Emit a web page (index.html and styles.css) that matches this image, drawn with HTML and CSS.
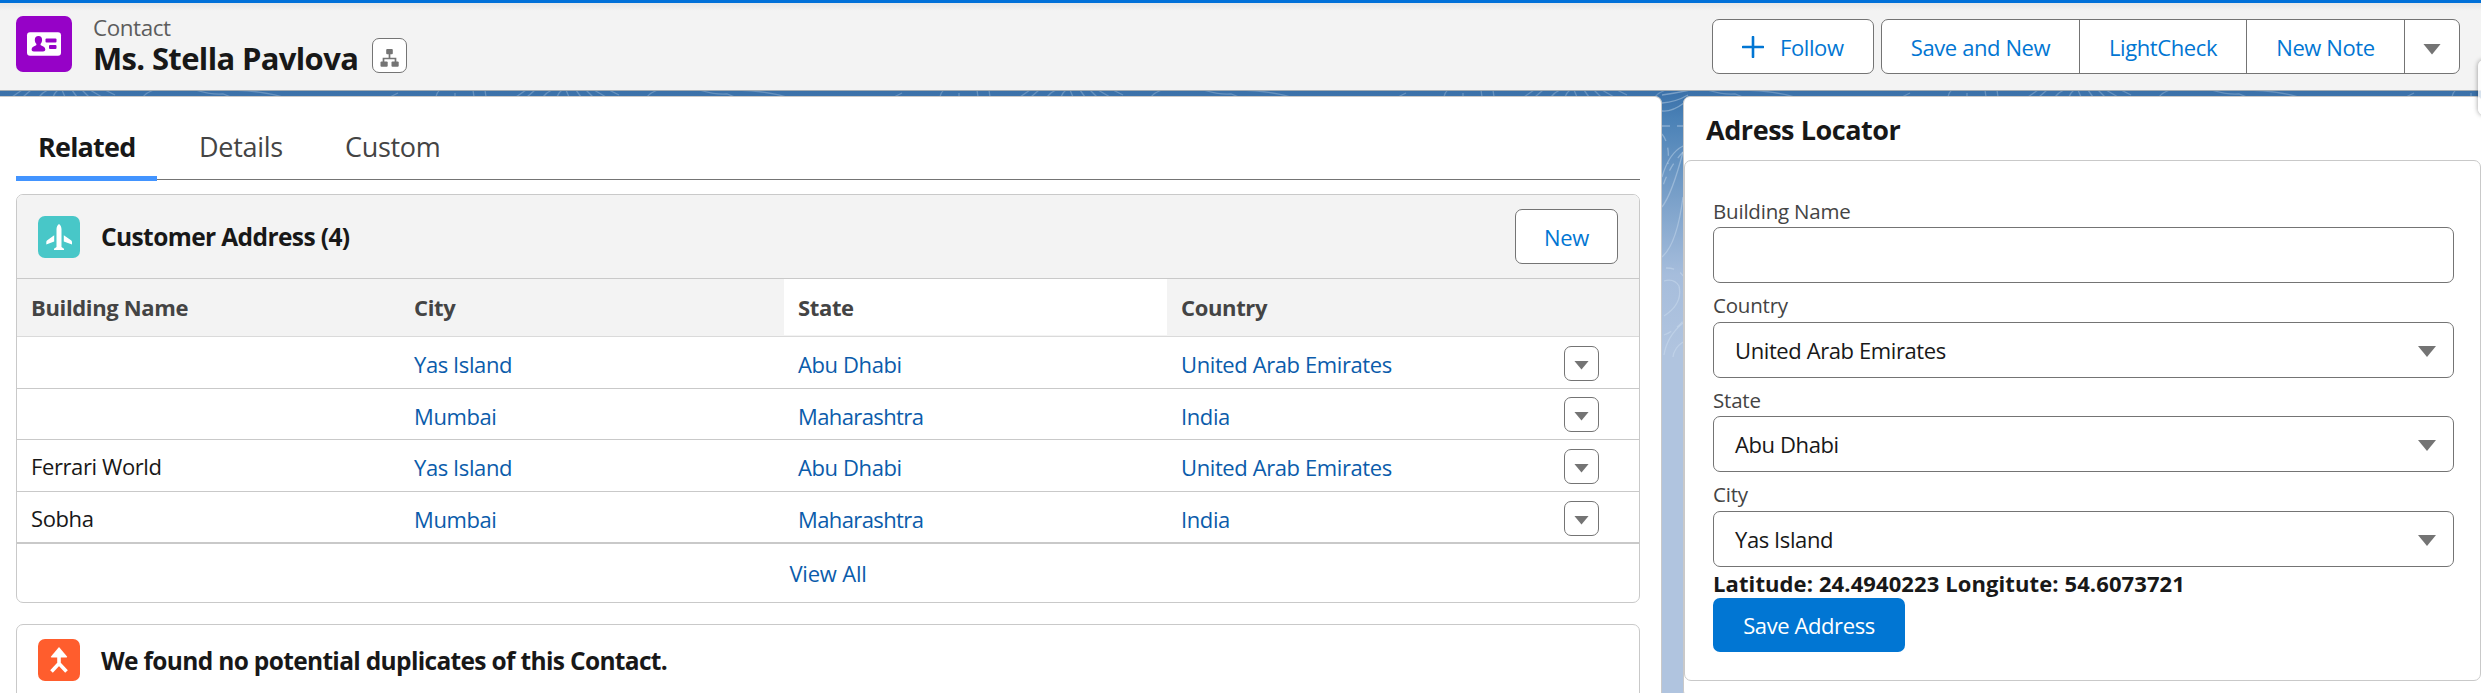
FILE: index.html
```html
<!DOCTYPE html>
<html lang="en">
<head>
<meta charset="utf-8">
<title>Ms. Stella Pavlova | Contact</title>
<link rel="stylesheet" href="styles.css">
</head>
<body>
<div class="page">
  <svg class="contours" width="2481" height="270" viewBox="0 0 2481 270" fill="none">
    <defs>
      <pattern id="strip" width="504" height="8" patternUnits="userSpaceOnUse">
        <path d="M12 7l10-7M23 7l8-7M39 7q4-5 9-7M53 7q2-5 5-7M62 0l3 7M72 0l5 7M82 0l7 7M90 0l12 7M105 0l10 5M143 7q4-5 11-7M195 0q17 5 28 4l8 3M233 0q30 1 50 7M390 7l8-4M436 7q1-5 4-7M455 7V3M473 0l1 7M486 7l-1-7"/>
      </pattern>
    </defs>
    <rect class="strip" width="2481" height="8" fill="url(#strip)"/>
    <g>
      <path d="M1662 5q14-2 28-5M1662 13q14-1 26-8M1662 21q10 1 22-8M1662 87q7-24 21-31M1662 117q10-13 21-55M1662 167q15-13 21-60M1664 191q10-3 15 5q4 18-15 30M1664 265q3-19 19-32M1673 267q1-9 10-15"/>
      <path stroke-dasharray="8 7" d="M1662 36h21M1662 44q8 10 6 30M1683 62q-15 16-21 37M1666 178q12 0 17 8M1664 245q12-5 19-14"/>
    </g>
  </svg>

  <header class="record-header">
    <div class="tile tile-contact">
      <svg width="56" height="56" viewBox="0 0 56 56">
        <rect x="11" y="16.300" width="34" height="23.400" rx="3" fill="#fff"/>
        <path fill="#9602c7" d="M22.500 20c2.400 0 3.600 1.700 3.600 3.900 0 1.500-.6 2.700-1.300 3.700-.5.900-.3 1.600.5 2 2.200.9 3.900 1.800 4 3.800 0 1.200-.9 2-2.200 2H17.800c-1.400 0-2.200-.8-2.200-2 .1-2 1.900-2.900 4.100-3.800.8-.4 1-1.100.4-2-.7-1-1.300-2.200-1.300-3.700 0-2.200 1.300-3.900 3.700-3.900z"/>
        <rect x="29.500" y="22.500" width="11" height="4" rx="1" fill="#9602c7"/>
        <rect x="33" y="29" width="7.500" height="4" rx="1" fill="#9602c7"/>
      </svg>
    </div>
    <div class="record-name">
      <span class="entity">Contact</span>
      <h1>Ms. Stella Pavlova</h1>
    </div>
    <button class="icon-button hierarchy" aria-label="View hierarchy">
      <svg width="19" height="18" viewBox="0 0 19 18">
        <path fill="none" stroke="#747474" stroke-width="1.700" d="M9.500 5v4.500M3.500 13V9.500h12V13"/>
        <g fill="#747474"><rect x="6.200" width="6.600" height="5.300" rx="1"/><rect x=".5" y="12.500" width="7.200" height="5.300" rx="1"/><rect x="11.500" y="12.500" width="7.200" height="5.300" rx="1"/></g>
      </svg>
    </button>
    <div class="actions">
      <button class="btn follow"><svg width="22" height="22" viewBox="0 0 22 22"><path d="M11 1v20M1 11h20" stroke="#0176d3" stroke-width="2.600" stroke-linecap="round"/></svg><span>Follow</span></button>
      <div class="button-group">
        <button class="seg seg-save">Save and New</button>
        <button class="seg seg-check">LightCheck</button>
        <button class="seg seg-note">New Note</button>
        <button class="seg seg-more" aria-label="More actions"><i class="caret"></i></button>
      </div>
    </div>
  </header>

  <main class="columns">
    <section class="panel main-panel">
      <nav class="tabs">
        <a class="tab active">Related</a>
        <a class="tab tab-details">Details</a>
        <a class="tab tab-custom">Custom</a>
      </nav>

      <article class="card">
        <div class="card-header">
          <div class="tile tile-address">
            <svg width="42" height="42" viewBox="0 0 42 42" fill="#fff">
              <path d="M21 8c-1.700 1.200-2.500 3-2.500 5.200V31l-2.500 1.700V34h10v-1.300L23.500 31V13.200C23.500 11 22.700 9.200 21 8z"/>
              <path d="M16.200 19.300v6.300L8.300 28.400v-2.200c0-.8.300-1.400 1-1.900zM25.800 19.300v6.300l8.200 2.800v-2.200c0-.8-.3-1.400-1-1.900z"/>
            </svg>
          </div>
          <h2>Customer Address (4)</h2>
          <button class="btn new-button">New</button>
        </div>
        <div class="grid-row grid-head">
          <div>Building Name</div><div>City</div><div class="hovered">State</div><div>Country</div><div></div>
        </div>
        <div class="grid-row row-a">
          <div></div><a>Yas Island</a><a>Abu Dhabi</a><a>United Arab Emirates</a><button class="icon-button" aria-label="Row actions"><i class="caret small"></i></button>
        </div>
        <div class="grid-row row-b">
          <div></div><a>Mumbai</a><a class="long">Maharashtra</a><a>India</a><button class="icon-button" aria-label="Row actions"><i class="caret small"></i></button>
        </div>
        <div class="grid-row row-a">
          <div>Ferrari World</div><a>Yas Island</a><a>Abu Dhabi</a><a>United Arab Emirates</a><button class="icon-button" aria-label="Row actions"><i class="caret small"></i></button>
        </div>
        <div class="grid-row row-last">
          <div>Sobha</div><a>Mumbai</a><a class="long">Maharashtra</a><a>India</a><button class="icon-button" aria-label="Row actions"><i class="caret small"></i></button>
        </div>
        <a class="view-all">View All</a>
      </article>

      <article class="card duplicates">
        <div class="tile tile-merge">
          <svg width="42" height="42" viewBox="0 0 42 42">
            <path fill="#fff" d="M21 8l8 9.500c.3.500.1.900-.5.900H13.500c-.6 0-.8-.4-.5-.9z"/>
            <path fill="none" stroke="#fff" stroke-width="3.600" stroke-linejoin="round" d="M21 17v7.500L13.500 32.500M21 24.500l7.500 8"/>
          </svg>
        </div>
        <h2>We found no potential duplicates of this Contact.</h2>
      </article>
    </section>

    <aside class="panel side-panel">
      <h2 class="side-title">Adress Locator</h2>
      <div class="locator">
        <label>Building Name</label>
        <div class="field"></div>
        <label>Country</label>
        <div class="field"><span>United Arab Emirates</span><i class="caret"></i></div>
        <label class="tight">State</label>
        <div class="field"><span>Abu Dhabi</span><i class="caret"></i></div>
        <label>City</label>
        <div class="field"><span>Yas Island</span><i class="caret"></i></div>
        <p class="coords">Latitude: 24.4940223 Longitute: 54.6073721</p>
        <button class="save">Save Address</button>
      </div>
    </aside>
  </main>
  <div class="drawer-handle"></div>
</div>
</body>
</html>
```

FILE: styles.css
```css
* { box-sizing: border-box; }
body { margin: 0; font-family: "Open Sans", "Noto Sans", sans-serif; font-size: 22px; letter-spacing: -0.4px; color: #181818; }
h1, h2, p { margin: 0; }
button { font: inherit; letter-spacing: inherit; padding: 0; margin: 0; cursor: pointer; }
svg { display: block; }

.page {
  position: relative;
  width: 2481px;
  height: 693px;
  overflow: hidden;
  background: linear-gradient(#3a70a8 90px, #4a81b6 118px, #7ea3cb 205px, #a6bddc 275px, #b0c4df 350px);
}
.contours { position: absolute; left: 0; top: 90px; stroke: #d5e3f3; stroke-opacity: .4; stroke-width: 1.3; }
.strip { stroke: none; opacity: .7; }

/* Record header */
.record-header {
  position: relative;
  display: flex;
  height: 91px;
  padding: 13px 21px 0 16px;
  border-top: 3px solid #0070d8;
  border-bottom: 1px solid #a3acb3;
  background: linear-gradient(#e6e6e6, #f3f3f3 8px);
}
.tile { flex: none; border-radius: 7px; }
.tile-contact { width: 56px; height: 56px; background: #9602c7; }
.record-name { width: 279px; margin-left: 21px; }
.entity { display: block; height: 22px; margin-top: -3px; line-height: 30px; font-size: 22.400px; color: #5c5c5c; }
h1 { margin-top: 3px; font-size: 31px; line-height: 40px; font-weight: 700; letter-spacing: -0.650px; white-space: nowrap; }
.icon-button {
  display: flex;
  align-items: center;
  justify-content: center;
  width: 35px;
  height: 35px;
  border: 1px solid #747474;
  border-radius: 7px;
  background: #fff;
}
.hierarchy { margin-top: 22px; padding-top: 4px; }
.actions { display: flex; gap: 7px; height: 55px; margin: 3px 0 0 auto; }
.btn { border: 1px solid #747474; border-radius: 7px; background: #fff; color: #0176d3; }
.follow { display: flex; align-items: center; width: 162px; padding-left: 29px; gap: 16px; }
.button-group { display: flex; width: 579px; border: 1px solid #747474; border-radius: 7px; background: #fff; overflow: hidden; }
.seg { border: 0; border-right: 1px solid #747474; background: none; color: #0176d3; white-space: nowrap; }
.seg-save { width: 198px; }
.seg-check { width: 167px; }
.seg-note { width: 158px; }
.seg-more { flex: 1; border-right: 0; display: flex; align-items: center; justify-content: center; padding-top: 5px; }
.caret { width: 18px; height: 11px; background: #747474; clip-path: polygon(0 0, 100% 0, 50% 100%); }
.caret.small { width: 15px; height: 9px; margin-top: 3px; }

/* Columns */
.columns { position: relative; display: flex; gap: 21px; padding-top: 5px; }
.panel { flex: none; height: 602px; border: 1px solid #c9c9c9; background: #fff; }
.main-panel { width: 1662px; height: 640px; padding: 0 21px 0 16px; border-left: 0; border-radius: 0 7px 7px 0; }
.side-panel { width: 800px; border-radius: 7px; }

.tabs { position: relative; display: flex; height: 83px; border-bottom: 1px solid #747474; font-size: 27px; color: #444; }
.tab { line-height: 100px; letter-spacing: -0.300px; }
.tab.active { width: 141px; height: 84px; padding-left: 22px; border-bottom: 5px solid #4294ff; color: #181818; font-weight: 700; letter-spacing: -0.800px; }
.tab-details { margin-left: 42px; width: 146px; }

.card { border: 1px solid #c9c9c9; border-radius: 7px; overflow: hidden; background: #fff; width: 1624px; }
.tabs + .card { margin-top: 14px; height: 409px; }
.card-header { display: flex; align-items: center; height: 84px; padding: 0 21px; border-bottom: 1px solid #c9c9c9; background: #f3f3f3; }
.card h2 { margin-left: 21px; font-size: 24.500px; font-weight: 700; letter-spacing: -0.600px; white-space: nowrap; }
.tile-address { width: 42px; height: 42px; background: #48c7c8; }
.tile-merge { width: 42px; height: 42px; background: #ff5d2d; }
.new-button { width: 103px; height: 55px; margin-left: auto; }

.grid-row { display: grid; grid-template-columns: 383px 384px 383px 383px 1fr; border-bottom: 1px solid #c9c9c9; white-space: nowrap; }
.grid-row > div, .grid-row > a { padding-left: 14px; }
.grid-row > a { color: #0b5cab; padding-top: 1px; }
.grid-row > .long { letter-spacing: -0.600px; }
.grid-row > .icon-button { margin: 9px 0 0 14px; }
.grid-head { height: 58px; border-bottom-color: #dadada; line-height: 57px; background: #f3f3f3; color: #444; font-weight: 700; letter-spacing: -0.350px; }
.grid-head .hovered { height: 56px; background: #fff; }
.row-a { height: 52px; line-height: 53px; }
.row-b { height: 51px; line-height: 52px; }
.row-last { height: 52px; line-height: 53px; border-bottom-width: 2px; }
.row-b > .icon-button { margin-top: 8px; }
.view-all { display: block; text-align: center; line-height: 58px; color: #0b5cab; letter-spacing: -0.200px; }
.duplicates { display: flex; height: 100px; margin-top: 21px; padding: 14px 21px 0; }
.card.duplicates h2 { line-height: 43px; letter-spacing: -0.670px; }

/* Address locator */
.side-title { height: 63px; padding-left: 22px; line-height: 65px; font-size: 27px; letter-spacing: -0.450px; }
.locator { display: flex; flex-direction: column; align-items: flex-start; width: 797px; height: 521px; padding: 36px 26px 0 28px; border: 1px solid #c9c9c9; border-radius: 7px; }
.locator label { height: 39px; padding-top: 8px; font-size: 20.500px; line-height: 28px; letter-spacing: -0.200px; color: #444; }
.locator label:first-child { height: 30px; padding-top: 0; }
.locator .tight { height: 38px; }
.field { display: flex; align-items: center; justify-content: space-between; width: 741px; height: 56px; padding: 0 17px 0 21px; border: 1px solid #747474; border-radius: 7px; }
.field .caret { margin-top: 3px; }
.coords { height: 31px; line-height: 32px; font-weight: 700; letter-spacing: 0.100px; white-space: nowrap; }
.save { width: 192px; height: 54px; border: 0; border-radius: 7px; background: #0176d3; color: #fff; }
.drawer-handle { position: absolute; right: -20px; top: 60px; width: 23px; height: 55px; border-radius: 6px; background: #fffc; box-shadow: 0 0 5px #0006; }
```
